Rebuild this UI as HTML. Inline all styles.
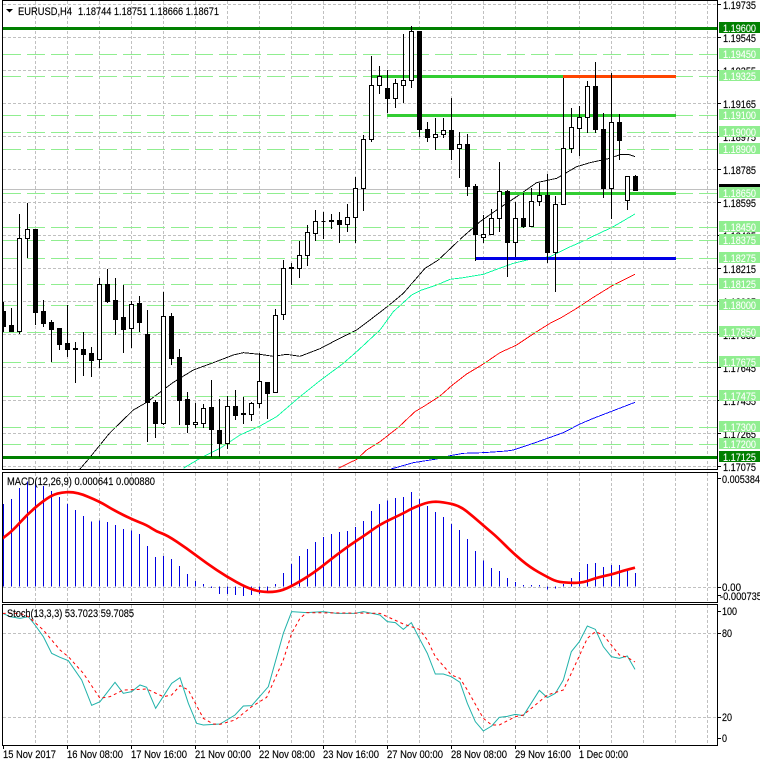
<!DOCTYPE html>
<html>
<head>
<meta charset="utf-8">
<title>EURUSD,H4</title>
<style>
html,body{margin:0;padding:0;background:#fff;width:760px;height:766px;overflow:hidden}
svg{display:block}
text{font-family:"Liberation Sans",sans-serif;font-size:11px;fill:#000;stroke:#000;stroke-width:.15px}
.w text,text.w{fill:#fff;stroke:#fff;stroke-width:.1px}
.l{fill:none;stroke-width:.9;vector-effect:non-scaling-stroke}
</style>
</head>
<body>
<svg width="760" height="766" viewBox="0 0 760 766" xmlns="http://www.w3.org/2000/svg">
<rect width="760" height="766" fill="#fff"/>

<!-- grid -->
<g stroke="#c0c0c0" stroke-width="1" stroke-dasharray="3 2" fill="none" shape-rendering="crispEdges">
<path d="M3 4.5H717M3 37.5H717M3 70.5H717M3 103.5H717M3 136.5H717M3 169.5H717M3 202.5H717M3 235.5H717M3 268.5H717M3 301.5H717M3 334.5H717M3 367.5H717M3 400.5H717M3 433.5H717M3 466.5H717"/>
<path d="M3 587.5H717M3 633.5H717M3 717.5H717"/>
<path d="M35.5 1V469M67.5 1V469M99.5 1V469M131.5 1V469M163.5 1V469M195.5 1V469M227.5 1V469M259.5 1V469M291.5 1V469M323.5 1V469M355.5 1V469M387.5 1V469M419.5 1V469M451.5 1V469M483.5 1V469M515.5 1V469M547.5 1V469M579.5 1V469M611.5 1V469M643.5 1V469M675.5 1V469M707.5 1V469"/>
<path d="M35.5 473V602M67.5 473V602M99.5 473V602M131.5 473V602M163.5 473V602M195.5 473V602M227.5 473V602M259.5 473V602M291.5 473V602M323.5 473V602M355.5 473V602M387.5 473V602M419.5 473V602M451.5 473V602M483.5 473V602M515.5 473V602M547.5 473V602M579.5 473V602M611.5 473V602M643.5 473V602M675.5 473V602M707.5 473V602"/>
<path d="M35.5 605V745M67.5 605V745M99.5 605V745M131.5 605V745M163.5 605V745M195.5 605V745M227.5 605V745M259.5 605V745M291.5 605V745M323.5 605V745M355.5 605V745M387.5 605V745M419.5 605V745M451.5 605V745M483.5 605V745M515.5 605V745M547.5 605V745M579.5 605V745M611.5 605V745M643.5 605V745M675.5 605V745M707.5 605V745"/>
</g>
<path d="M3 189.5H717" stroke="#c0c0c0" stroke-width="1" fill="none" shape-rendering="crispEdges"/>

<!-- moving averages -->
<g fill="none" shape-rendering="crispEdges">
<g transform="translate(0,240) scale(.33333)">
<polyline class="l" stroke="#000" points="240,687 265,658 330,578 400,510 440,487 480,457 520,427 580,390 640,368 700,345 730,338 780,343 820,349 860,343 900,349 960,326 1000,305 1070,270 1140,217"/>
<polyline class="l" stroke="#00fa9a" points="550,685 600,655 660,625 720,585 780,558 830,530 900,470 960,422 1030,370 1070,335 1140,270"/>
<polyline class="l" stroke="#f00" points="1015,685 1070,658 1100,630 1140,605"/>
</g>
<g transform="translate(380,240) scale(.33333)">
<polyline class="l" stroke="#000" points="0,217 40,185 70,160 135,85 175,60 235,3"/>
<polyline class="l" stroke="#00fa9a" points="0,270 40,215 95,165 125,150 170,135 210,118 250,113 310,103 350,88 400,70 450,58 510,50 560,25 610,3"/>
<polyline class="l" stroke="#f00" points="0,605 55,562 105,515 135,497 180,468 215,437 260,402 310,372 360,338 410,315 470,275 510,250 540,235 590,205 640,172 700,135 765,103"/>
<polyline class="l" stroke="#00f" points="33,687 100,668 170,657 210,647 250,640 310,638 380,633 400,630 460,610 550,578 600,552 640,535 765,487"/>
</g>
<g transform="translate(380,0) scale(.33333)">
<polyline class="l" stroke="#000" points="240,718 300,665 350,630 410,590 470,548 530,535 590,500 630,488 690,475 720,464 745,463 765,470"/>
<polyline class="l" stroke="#00fa9a" points="620,718 700,680 765,642"/>
</g>
</g>

<!-- horizontal objects -->
<g fill="none" shape-rendering="crispEdges">
<path stroke="#90ee90" stroke-width="1" stroke-dasharray="18 6" d="M3 54.5H717M3 76.5H717M3 115.5H717M3 132.5H717M3 149.5H717M3 193.5H717M3 227.5H717M3 240.5H717M3 258.5H717M3 284.5H717M3 305.5H717M3 332.5H717M3 362.5H717M3 396.5H717M3 427.5H717M3 444.5H717"/>
<path stroke="#008000" stroke-width="3" d="M3 28.5H717M3 457.5H717"/>
<path stroke="#32cd32" stroke-width="3" d="M372 76.5H563M387 115.5H676M502 193.5H676"/>
<path stroke="#ff4500" stroke-width="3" d="M563 76.5H676"/>
<path stroke="#0000e6" stroke-width="3" d="M475 258.5H676"/>
</g>

<!-- candle wicks -->
<path fill="none" stroke="#000" stroke-width="1" shape-rendering="crispEdges" d="M3.5 302V332M11.5 308V331M19.5 214V334M27.5 203V258M35.5 229V325M43.5 300V327M51.5 320V362M59.5 328V350M67.5 305V357M75.5 342V383M83.5 332V376M91.5 347V377M99.5 278V368M107.5 269V303M115.5 278V335M123.5 285V353M131.5 301V348M139.5 296V332M147.5 310V442M155.5 400V438M163.5 292V425M171.5 313V365M179.5 349V425M187.5 392V433M195.5 403V428M203.5 404V428M211.5 380V457M219.5 399V457M227.5 396V449M235.5 390V420M243.5 397V424M251.5 402V421M259.5 353V408M267.5 382V419M275.5 309V393M283.5 260V320M291.5 263V285M299.5 241V278M307.5 225V266M315.5 210V241M323.5 212V239M331.5 214V229M339.5 212V243M347.5 204V232M355.5 177V243M363.5 135V211M371.5 56V142M379.5 66V94M387.5 70V113M395.5 79V108M403.5 34V103M411.5 26V88M419.5 31V137M427.5 122V142M435.5 118V150M443.5 118V138M451.5 98V160M459.5 132V178M467.5 134V196M475.5 184V261M483.5 215V243M491.5 209V235M499.5 162V232M507.5 190V277M515.5 202V257M523.5 193V228M531.5 188V227M539.5 183V206M547.5 174V263M555.5 196V292M563.5 78V204M571.5 108V153M579.5 106V156M587.5 81V133M595.5 62V133M603.5 113V198M611.5 73V219M619.5 114V160M627.5 176V210M635.5 175V191"/>

<!-- white bodies -->
<path fill="#fff" stroke="#000" stroke-width="1" d="M17.5 238.5h4v93h-4zM25.5 229.5h4v9h-4zM97.5 284.5h4v75h-4zM129.5 304.5h4v24h-4zM161.5 316.5h4v107h-4zM193.5 422.5h4v2h-4zM201.5 408.5h4v15h-4zM225.5 406.5h4v37h-4zM249.5 403.5h4v11h-4zM257.5 381.5h4v22h-4zM273.5 315.5h4v77h-4zM281.5 268.5h4v46h-4zM297.5 255.5h4v13h-4zM305.5 232.5h4v23h-4zM313.5 221.5h4v12h-4zM345.5 217.5h4v7h-4zM353.5 188.5h4v29h-4zM361.5 139.5h4v49h-4zM369.5 85.5h4v54h-4zM377.5 76.5h4v9h-4zM393.5 83.5h4v15h-4zM401.5 80.5h4v5h-4zM409.5 31.5h4v49h-4zM433.5 134.5h4v3h-4zM441.5 130.5h4v4h-4zM457.5 144.5h4v4h-4zM481.5 234.5h4v3h-4zM489.5 218.5h4v16h-4zM497.5 191.5h4v27h-4zM513.5 218.5h4v24h-4zM529.5 201.5h4v25h-4zM537.5 195.5h4v6h-4zM553.5 204.5h4v48h-4zM561.5 148.5h4v56h-4zM569.5 127.5h4v21h-4zM577.5 117.5h4v11h-4zM585.5 86.5h4v31h-4zM609.5 122.5h4v66h-4zM625.5 176.5h4v24h-4z"/>

<!-- black bodies -->
<path fill="#000" stroke="#000" stroke-width="1" d="M1.5 311.5h4v15h-4zM9.5 325.5h4v6h-4zM33.5 229.5h4v83h-4zM41.5 311.5h4v12h-4zM49.5 322.5h4v7h-4zM57.5 328.5h4v16h-4zM65.5 343.5h4v6h-4zM73.5 348.5h4v1h-4zM81.5 349.5h4v5h-4zM89.5 353.5h4v7h-4zM105.5 284.5h4v17h-4zM113.5 300.5h4v19h-4zM121.5 317.5h4v12h-4zM137.5 303.5h4v19h-4zM145.5 334.5h4v68h-4zM153.5 402.5h4v21h-4zM169.5 316.5h4v42h-4zM177.5 357.5h4v43h-4zM185.5 399.5h4v25h-4zM209.5 407.5h4v22h-4zM217.5 430.5h4v13h-4zM233.5 406.5h4v9h-4zM241.5 413.5h4v1h-4zM265.5 382.5h4v11h-4zM289.5 267.5h4v1h-4zM321.5 221.5h4v0h-4zM329.5 220.5h4v1h-4zM337.5 220.5h4v4h-4zM385.5 88.5h4v10h-4zM417.5 31.5h4v98h-4zM425.5 129.5h4v8h-4zM449.5 130.5h4v19h-4zM465.5 144.5h4v42h-4zM473.5 186.5h4v48h-4zM505.5 191.5h4v51h-4zM521.5 218.5h4v8h-4zM545.5 195.5h4v57h-4zM593.5 86.5h4v43h-4zM601.5 129.5h4v59h-4zM617.5 122.5h4v18h-4zM633.5 176.5h4v14h-4z"/>

<!-- MACD histogram and signal -->
<g transform="translate(0,470) scale(.33333)">
<path stroke="#0000e0" stroke-width="1" style="vector-effect:non-scaling-stroke" fill="none" shape-rendering="crispEdges" d="M10.5 350V102M34.5 350V87M58.5 350V54M82.5 350V35M106.5 350V35M130.5 350V48M154.5 350V63M178.5 350V81M202.5 350V102M226.5 350V120M250.5 350V138M274.5 350V155M298.5 350V152M322.5 350V156M346.5 350V165M370.5 350V177M394.5 350V182M418.5 350V192M442.5 350V228M466.5 350V261M490.5 350V258M514.5 350V267M538.5 350V288M562.5 350V312M586.5 350V333M610.5 350V342M634.5 350V354M658.5 350V372M682.5 350V372M706.5 350V375M730.5 350V378M754.5 350V375M778.5 350V372M802.5 350V363M826.5 350V342M850.5 350V309M874.5 350V282M898.5 350V258M922.5 350V237M946.5 350V216M970.5 350V201M994.5 350V192M1018.5 350V186M1042.5 350V183M1066.5 350V171M1090.5 350V153M1114.5 350V123M1138.5 350V102M1162.5 350V92M1186.5 350V84M1210.5 350V81M1234.5 350V66M1258.5 350V87M1282.5 350V108M1306.5 350V126M1330.5 350V141M1354.5 350V162M1378.5 350V180M1402.5 350V207M1426.5 350V243M1450.5 350V272M1474.5 350V294M1498.5 350V303M1522.5 350V324M1546.5 350V336M1570.5 350V345M1594.5 350V345M1618.5 350V345M1642.5 350V358M1666.5 350V355M1690.5 350V342M1714.5 350V324M1738.5 350V306M1762.5 350V282M1786.5 350V279M1810.5 350V291M1834.5 350V285M1858.5 350V285M1882.5 350V297M1906.5 350V309"/>
<path fill="none" stroke="#f00" stroke-width="2.7" style="vector-effect:non-scaling-stroke" stroke-linejoin="round" d="M8 205L24 192.5Q40 180 60 157.5Q80 135 105 113.5Q130 92 150 80Q170 68 200 66.5Q230 65 265 80.5Q300 95 320 107.5Q340 120 370 135Q400 150 420 157.5Q440 165 455 175Q470 185 485 190Q500 195 530 215Q560 235 590 257.5Q620 280 650 300Q680 320 710 336.5Q740 353 760 359Q780 366 805 366Q830 366 850 359Q870 352 905 331Q940 310 970 286Q1000 262 1025 243.5Q1050 225 1075 208.5Q1100 192 1120 177.5Q1140 163 1175 146.5Q1210 130 1225 121.5Q1240 113 1262.5 104.5Q1285 95 1307.5 95Q1330 96 1355 102Q1380 108 1400 124Q1420 140 1440 157.5Q1460 175 1475 187.5Q1490 200 1515 225Q1540 250 1565 271Q1590 292 1615 306Q1640 320 1655 327.5Q1670 335 1690 337Q1710 339 1730 338.5Q1750 338 1770 330.5Q1790 323 1815 317.5Q1840 312 1855 307Q1870 302 1887.5 297.5L1905 293"/>
</g>

<!-- Stochastic -->
<g transform="translate(0,470) scale(.33333)" fill="none" stroke-width="1">
<polyline stroke="#20b2aa" style="vector-effect:non-scaling-stroke" points="8,430 30,440 60,445 85,440 105,465 130,500 155,550 180,562 205,572 245,630 275,706 300,695 345,637 370,670 395,665 420,645 440,652 467,715 515,640 540,623 565,700 590,760 610,765 660,762 705,735 730,708 755,707 805,650 850,490 875,425 920,428 970,425 1010,430 1065,430 1090,425 1140,435 1162,455 1186,458 1210,478 1234,458 1258,505 1282,550 1306,612 1330,612 1354,620 1380,637 1402,700 1426,755 1450,783 1475,768 1498,742 1522,739 1546,733 1570,737 1618,661 1642,683 1666,670 1690,630 1714,545 1738,515 1762,468 1786,478 1810,530 1834,560 1858,565 1882,558 1905,598"/>
<polyline stroke="#f00" stroke-dasharray="3 3" style="vector-effect:non-scaling-stroke" points="8,430 60,430 85,440 130,480 180,540 205,560 250,610 300,685 330,680 370,660 420,658 440,657 490,680 515,675 540,647 565,660 610,745 640,762 660,763 705,750 755,710 800,682 850,570 875,490 900,445 920,428 1140,430 1162,440 1210,462 1258,478 1282,510 1306,560 1354,615 1380,625 1402,660 1450,745 1475,765 1498,765 1546,740 1570,735 1618,695 1642,675 1690,660 1714,610 1762,505 1786,485 1810,495 1834,525 1858,555 1882,562 1905,576"/>
</g>

<!-- frames -->
<rect x="0" y="0" width="2" height="766" fill="#fff"/>
<rect x="718" y="0" width="42" height="470" fill="#fff"/>
<g fill="none" stroke="#000" stroke-width="1" shape-rendering="crispEdges">
<path d="M2.5 0V469.5H717.5V0M2.5 .5H717.5"/>
<path d="M2.5 472V602.5H717.5V472M2.5 472.5H717.5"/>
<path d="M2.5 604V745.5H717.5V604M2.5 604.5H717.5"/>
<path d="M717 4.5h4M717 37.5h4M717 70.5h4M717 103.5h4M717 136.5h4M717 169.5h4M717 202.5h4M717 235.5h4M717 268.5h4M717 301.5h4M717 334.5h4M717 367.5h4M717 400.5h4M717 433.5h4M717 466.5h4M717 478.5h4M717 587.5h4M717 595.5h4M717 611.5h4M717 633.5h4M717 717.5h4M717 738.5h4"/>
<path d="M3.5 745v4M67.5 745v4M131.5 745v4M195.5 745v4M259.5 745v4M323.5 745v4M387.5 745v4M451.5 745v4M515.5 745v4M579.5 745v4"/>
</g>

<!-- header -->
<path d="M6 9h7l-3.5 3.5z" fill="#000"/>
<text x="18" y="15" textLength="54" lengthAdjust="spacingAndGlyphs">EURUSD,H4</text>
<text x="78" y="15" textLength="141" lengthAdjust="spacingAndGlyphs">1.18744 1.18751 1.18666 1.18671</text>
<text x="7" y="485" textLength="148" lengthAdjust="spacingAndGlyphs">MACD(12,26,9) 0.000641 0.000880</text>
<text x="7" y="617" textLength="127" lengthAdjust="spacingAndGlyphs">Stoch(13,3,3) 53.7023 59.7085</text>

<!-- price scale -->
<g>
<text x="723" y="9" textLength="33" lengthAdjust="spacingAndGlyphs">1.19735</text>
<text x="723" y="42" textLength="33" lengthAdjust="spacingAndGlyphs">1.19545</text>
<text x="723" y="75" textLength="33" lengthAdjust="spacingAndGlyphs">1.19355</text>
<text x="723" y="108" textLength="33" lengthAdjust="spacingAndGlyphs">1.19165</text>
<text x="723" y="141" textLength="33" lengthAdjust="spacingAndGlyphs">1.18975</text>
<text x="723" y="174" textLength="33" lengthAdjust="spacingAndGlyphs">1.18785</text>
<text x="723" y="207" textLength="33" lengthAdjust="spacingAndGlyphs">1.18595</text>
<text x="723" y="240" textLength="33" lengthAdjust="spacingAndGlyphs">1.18405</text>
<text x="723" y="273" textLength="33" lengthAdjust="spacingAndGlyphs">1.18215</text>
<text x="723" y="306" textLength="33" lengthAdjust="spacingAndGlyphs">1.18025</text>
<text x="723" y="339" textLength="33" lengthAdjust="spacingAndGlyphs">1.17835</text>
<text x="723" y="372" textLength="33" lengthAdjust="spacingAndGlyphs">1.17645</text>
<text x="723" y="405" textLength="33" lengthAdjust="spacingAndGlyphs">1.17455</text>
<text x="723" y="438" textLength="33" lengthAdjust="spacingAndGlyphs">1.17265</text>
<text x="723" y="471" textLength="33" lengthAdjust="spacingAndGlyphs">1.17075</text>
</g>

<rect x="719" y="184" width="41" height="11" fill="#000"/>

<!-- object labels -->
<g fill="#90ee90">
<rect x="719" y="48" width="41" height="11"/>
<rect x="719" y="70" width="41" height="11"/>
<rect x="719" y="109" width="41" height="11"/>
<rect x="719" y="126" width="41" height="11"/>
<rect x="719" y="143" width="41" height="11"/>
<rect x="719" y="187" width="41" height="11"/>
<rect x="719" y="221" width="41" height="11"/>
<rect x="719" y="234" width="41" height="11"/>
<rect x="719" y="252" width="41" height="11"/>
<rect x="719" y="278" width="41" height="11"/>
<rect x="719" y="299" width="41" height="11"/>
<rect x="719" y="326" width="41" height="11"/>
<rect x="719" y="356" width="41" height="11"/>
<rect x="719" y="390" width="41" height="11"/>
<rect x="719" y="421" width="41" height="11"/>
<rect x="719" y="438" width="41" height="11"/>
</g>
<g fill="#008000">
<rect x="719" y="22" width="41" height="11"/>
<rect x="719" y="451" width="41" height="11"/>
</g>
<g class="w">
<text x="723" y="32" textLength="33" lengthAdjust="spacingAndGlyphs">1.19600</text>
<text x="723" y="58" textLength="33" lengthAdjust="spacingAndGlyphs">1.19450</text>
<text x="723" y="80" textLength="33" lengthAdjust="spacingAndGlyphs">1.19325</text>
<text x="723" y="119" textLength="33" lengthAdjust="spacingAndGlyphs">1.19100</text>
<text x="723" y="136" textLength="33" lengthAdjust="spacingAndGlyphs">1.19000</text>
<text x="723" y="153" textLength="33" lengthAdjust="spacingAndGlyphs">1.18900</text>
<text x="723" y="197" textLength="33" lengthAdjust="spacingAndGlyphs">1.18650</text>
<text x="723" y="231" textLength="33" lengthAdjust="spacingAndGlyphs">1.18450</text>
<text x="723" y="244" textLength="33" lengthAdjust="spacingAndGlyphs">1.18375</text>
<text x="723" y="262" textLength="33" lengthAdjust="spacingAndGlyphs">1.18275</text>
<text x="723" y="288" textLength="33" lengthAdjust="spacingAndGlyphs">1.18125</text>
<text x="723" y="309" textLength="33" lengthAdjust="spacingAndGlyphs">1.18000</text>
<text x="723" y="336" textLength="33" lengthAdjust="spacingAndGlyphs">1.17850</text>
<text x="723" y="366" textLength="33" lengthAdjust="spacingAndGlyphs">1.17675</text>
<text x="723" y="400" textLength="33" lengthAdjust="spacingAndGlyphs">1.17475</text>
<text x="723" y="431" textLength="33" lengthAdjust="spacingAndGlyphs">1.17300</text>
<text x="723" y="448" textLength="33" lengthAdjust="spacingAndGlyphs">1.17200</text>
<text x="723" y="461" textLength="33" lengthAdjust="spacingAndGlyphs">1.17125</text>
</g>

<!-- indicator scales -->
<text x="722" y="483" textLength="38" lengthAdjust="spacingAndGlyphs">0.005384</text>
<text x="722" y="591" textLength="19" lengthAdjust="spacingAndGlyphs">0.00</text>
<text x="720" y="600" textLength="42" lengthAdjust="spacingAndGlyphs">-0.000735</text>
<text x="722" y="615" textLength="15" lengthAdjust="spacingAndGlyphs">100</text>
<text x="722" y="637" textLength="10" lengthAdjust="spacingAndGlyphs">80</text>
<text x="722" y="721" textLength="10" lengthAdjust="spacingAndGlyphs">20</text>
<text x="722" y="742" textLength="5" lengthAdjust="spacingAndGlyphs">0</text>

<!-- time scale -->
<text x="3" y="758" textLength="53" lengthAdjust="spacingAndGlyphs">15 Nov 2017</text>
<text x="67" y="758" textLength="56" lengthAdjust="spacingAndGlyphs">16 Nov 08:00</text>
<text x="131" y="758" textLength="56" lengthAdjust="spacingAndGlyphs">17 Nov 16:00</text>
<text x="195" y="758" textLength="56" lengthAdjust="spacingAndGlyphs">21 Nov 00:00</text>
<text x="259" y="758" textLength="56" lengthAdjust="spacingAndGlyphs">22 Nov 08:00</text>
<text x="323" y="758" textLength="56" lengthAdjust="spacingAndGlyphs">23 Nov 16:00</text>
<text x="387" y="758" textLength="56" lengthAdjust="spacingAndGlyphs">27 Nov 00:00</text>
<text x="451" y="758" textLength="56" lengthAdjust="spacingAndGlyphs">28 Nov 08:00</text>
<text x="515" y="758" textLength="56" lengthAdjust="spacingAndGlyphs">29 Nov 16:00</text>
<text x="579" y="758" textLength="49" lengthAdjust="spacingAndGlyphs">1 Dec 00:00</text>
</svg>
</body>
</html>
